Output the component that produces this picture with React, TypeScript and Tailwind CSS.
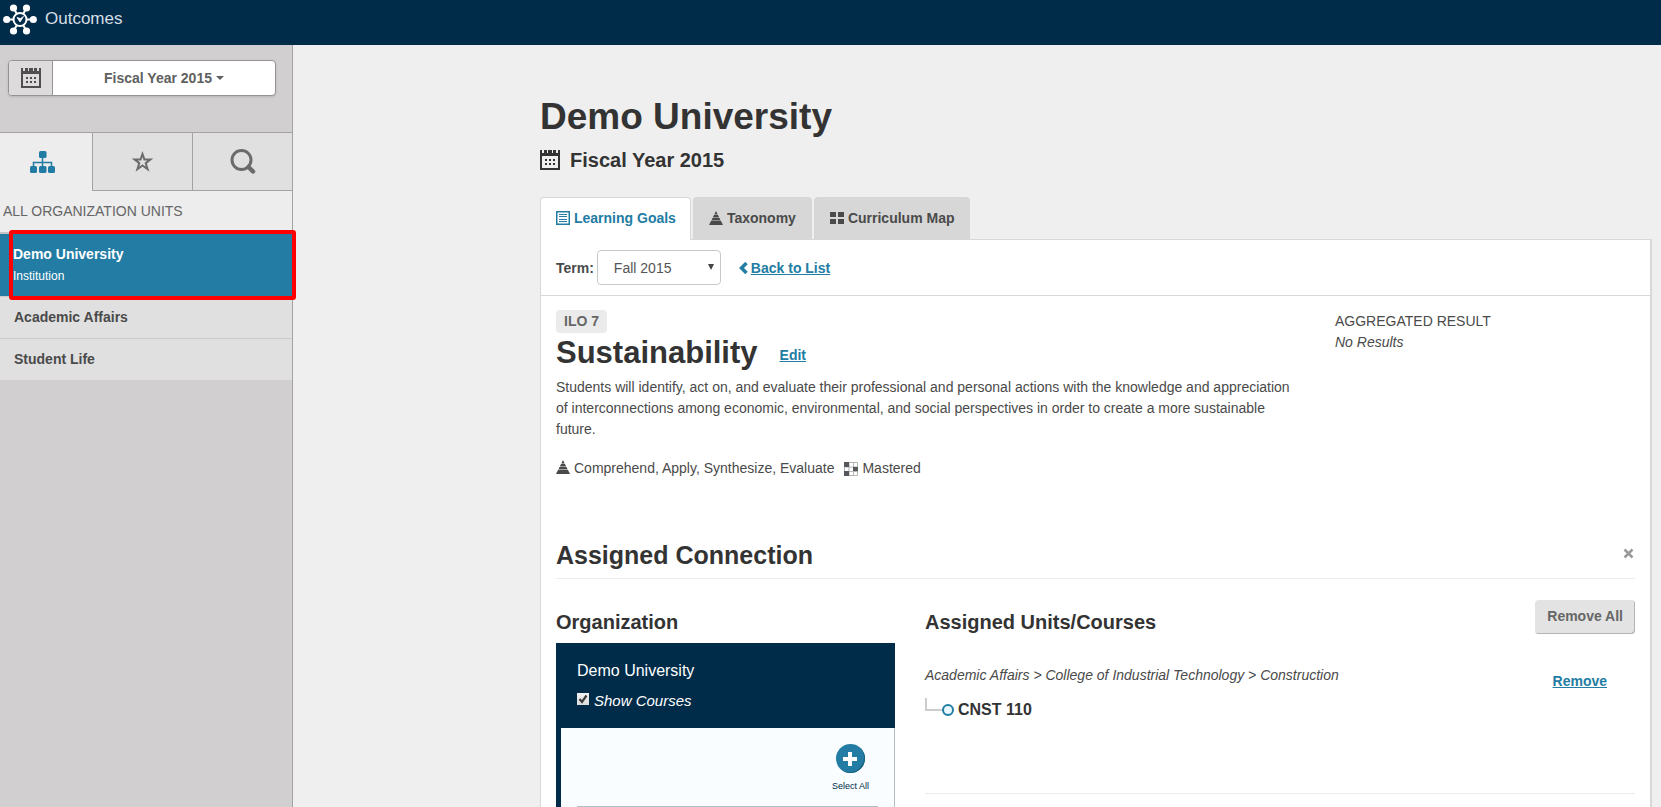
import type { ReactNode } from "react";

function LogoIcon() {
  const nodes = [
    [10.500, 5],
    [23.500, 5],
    [30.300, 16.500],
    [23.500, 28],
    [10.500, 28],
    [3.700, 16.500],
  ];
  return (
    <svg viewBox="0 0 34 33" className="h-[33px] w-[34px]" aria-hidden="true">
      {nodes.map(([x, y]) => (
        <g key={`${x}-${y}`}>
          <path d={`M17 16.5L${x} ${y}`} stroke="#fff" strokeWidth="2" />
          <circle cx={x} cy={y} r="3.6" fill="#fff" />
        </g>
      ))}
      <circle cx="17" cy="16.500" r="6.500" fill="#002b49" stroke="#fff" strokeWidth="2" />
      <path d="M14 14.500l3 4.500 3.500-5.500-3 2z" fill="#fff" stroke="#fff" strokeWidth="0.800" />
    </svg>
  );
}

function CalendarIcon() {
  return (
    <svg viewBox="0 0 20 20" className="h-5 w-5 shrink-0" fill="currentColor" aria-hidden="true">
      <path fillRule="evenodd" d="M0 0h2v3h2V0h3v3h1V0h4v3h1V0h3v3h2V0h2v20H0zM2 6v12h16V6z" />
      <path d="M5 9h2v2H5zM9 9h2v2H9zM13 9h2v2h-2zM5 13h2v2H5zM9 13h2v2H9zM13 13h2v2h-2z" />
    </svg>
  );
}

function SitemapIcon() {
  return (
    <svg viewBox="0 0 25 22" className="h-[22px] w-[25px]" fill="currentColor" aria-hidden="true">
      <rect x="9" y="0" width="7.500" height="7" rx="1.500" />
      <rect x="0" y="15" width="7" height="7" rx="1.500" />
      <rect x="9" y="15" width="7.500" height="7" rx="1.500" />
      <rect x="18" y="15" width="7" height="7" rx="1.500" />
      <path d="M12.500 6v10M3.500 16v-4.500h18V16" fill="none" stroke="currentColor" strokeWidth="1.500" />
    </svg>
  );
}

function StarIcon() {
  return (
    <svg viewBox="0 0 21 21" className="h-[21px] w-[21px]" aria-hidden="true">
      <path
        d="M10.500 3l1.900 5.400h6l-4.700 3.700 1.900 6.100-5.100-3.700-5.100 3.700 1.900-6.100-4.700-3.700h6z"
        fill="none"
        stroke="currentColor"
        strokeWidth="2"
      />
    </svg>
  );
}

function SearchIcon() {
  return (
    <svg viewBox="0 0 26 26" className="h-[26px] w-[26px]" aria-hidden="true">
      <circle cx="11.500" cy="11" r="9.500" fill="none" stroke="currentColor" strokeWidth="3" />
      <path d="M18.500 18l4.500 4.500" stroke="currentColor" strokeWidth="4.500" strokeLinecap="round" />
    </svg>
  );
}

function ListIcon() {
  return (
    <svg viewBox="0 0 14 14" className="h-3.5 w-3.5 shrink-0" aria-hidden="true">
      <rect x="0.750" y="0.750" width="12.500" height="12.500" fill="none" stroke="currentColor" strokeWidth="1.500" />
      <path d="M3 3.500h8M3 5.500h8M3 8.500h8M3 10.500h8" stroke="currentColor" strokeWidth="1" />
    </svg>
  );
}

function PyramidIcon() {
  return (
    <svg viewBox="0 0 14 14" className="h-3.5 w-3.5 shrink-0" fill="currentColor" aria-hidden="true">
      <path d="M7 0l1.700 3.400H5.300zM5 4h4l1.200 2.400H3.800zM3.500 7h7l1.200 2.400H2.300zM2 10h10l2 4H0z" />
    </svg>
  );
}

function GridIcon() {
  return (
    <svg viewBox="0 0 14 12" className="h-3 w-3.5 shrink-0" fill="currentColor" aria-hidden="true">
      <path d="M0 0h6v5H0zM8 0h6v5H8zM0 7h6v5H0zM8 7h6v5H8z" />
    </svg>
  );
}

function MatrixIcon() {
  return (
    <svg viewBox="0 0 14 14" className="h-3.5 w-3.5 shrink-0" aria-hidden="true">
      <path d="M.5.5h13v13H.5zM5 .5v13M9.500.5v13M.5 5h13M.5 9.500h13" fill="#fff" stroke="#b5b5b5" />
      <path d="M0 0h5v5H0zM9 5h5v4H9zM0 9h5v5H0z" fill="#54585c" />
    </svg>
  );
}

const units = ["Academic Affairs", "Student Life"];

function SidebarTab({ label, children }: { label: string; children: ReactNode }) {
  return (
    <button
      type="button"
      aria-label={label}
      className="flex flex-1 items-center justify-center border-b border-l border-[#a3a3a3] bg-[#e0e0e0] text-[#6b6b6b]"
    >
      {children}
    </button>
  );
}

function Sidebar() {
  return (
    <aside className="relative w-[293px] shrink-0 border-r border-[#a3a3a3] bg-[#d1cfcf]">
      <div className="px-2 pt-[15px] pb-9">
        <button
          type="button"
          className="flex h-9 w-[268px] overflow-hidden rounded border border-[#949494] bg-white text-sm font-bold text-[#606060] shadow-sm"
        >
          <span className="flex h-full w-11 items-center justify-center border-r border-[#949494] bg-[#dddbdb] text-[#4f4f4f]">
            <CalendarIcon />
          </span>
          <span className="flex h-full flex-1 items-center justify-center gap-1">
            Fiscal Year 2015
            <svg viewBox="0 0 8 4" className="h-1 w-2" fill="currentColor" aria-hidden="true">
              <path d="M0 0h8L4 4z" />
            </svg>
          </span>
        </button>
      </div>

      <div className="flex h-[59px] border-t border-[#a3a3a3]">
        <button
          type="button"
          aria-label="Organization units"
          className="flex w-[92px] items-center justify-center bg-[#ededed] pr-2 text-[#227ca3]"
        >
          <SitemapIcon />
        </button>
        <SidebarTab label="Favorites">
          <StarIcon />
        </SidebarTab>
        <SidebarTab label="Search">
          <SearchIcon />
        </SidebarTab>
      </div>

      <h2 className="h-[43px] border-b-2 border-[#c4c4c4] bg-[#ededed] px-[3px] pt-2.5 text-sm leading-5 text-[#666]">
        ALL ORGANIZATION UNITS
      </h2>
      <nav>
        <a href="#demo" className="block h-[62px] bg-[#227ca3] px-[13px] pt-[9px] text-white">
          <span className="block text-sm leading-[22px] font-bold">Demo University</span>
          <span className="block text-xs leading-[22px]">Institution</span>
        </a>
        {units.map((unit) => (
          <a
            key={unit}
            href="#unit"
            className="block h-[42px] border-t border-[#cbcbcb] bg-[#e0e0e0] px-3.5 text-sm leading-10 font-bold text-[#4a4a4a]"
          >
            {unit}
          </a>
        ))}
      </nav>

      {/* highlight frame around the selected unit */}
      <div className="pointer-events-none absolute top-[185px] left-[9px] h-[70px] w-[287px] rounded-[3px] border-4 border-[#fe0000]" />
    </aside>
  );
}

function Tabs() {
  return (
    <div className="flex gap-0.5 text-sm font-bold text-[#4a4a4a]" role="tablist">
      <button
        type="button"
        role="tab"
        aria-selected="true"
        className="-mb-px flex h-[43px] items-center gap-1 rounded-t border border-b-0 border-[#d8d8d8] bg-white pr-3.5 pb-0.5 pl-[15px] text-[#227ca3]"
      >
        <ListIcon />
        Learning Goals
      </button>
      <button type="button" role="tab" aria-selected="false" className="flex h-[42px] items-center gap-1 rounded-t bg-[#d7d7d7] px-4">
        <PyramidIcon />
        Taxonomy
      </button>
      <button type="button" role="tab" aria-selected="false" className="flex h-[42px] items-center gap-1 rounded-t bg-[#d7d7d7] px-4">
        <GridIcon />
        Curriculum Map
      </button>
    </div>
  );
}

function GoalSummary() {
  return (
    <section className="flex px-[15px] pt-3.5">
      <div className="w-[748px] shrink-0">
        <span className="block h-[23px] w-fit rounded bg-[#ebebeb] px-2 text-sm leading-[23px] font-bold text-[#666]">
          ILO 7
        </span>
        <div className="flex items-center gap-[22px]">
          <h2 className="text-[31px] leading-10 font-bold text-[#333]">Sustainability</h2>
          <a href="#edit" className="pt-1 text-sm leading-5 font-bold text-[#227ca3] underline">
            Edit
          </a>
        </div>
        <p className="mt-1 text-sm leading-[21px]">
          Students will identify, act on, and evaluate their professional and personal actions with the knowledge and
          appreciation of interconnections among economic, environmental, and social perspectives in order to create a
          more sustainable future.
        </p>
        <div className="mt-[18px] flex items-center gap-1 text-sm leading-[21px]">
          <span className="pb-1">
            <PyramidIcon />
          </span>
          <span className="mr-1.5">Comprehend, Apply, Synthesize, Evaluate</span>
          <MatrixIcon />
          <span>Mastered</span>
        </div>
      </div>
      <div className="ml-[31px] pt-px text-sm leading-[21px]">
        <h3>AGGREGATED RESULT</h3>
        <p className="italic">No Results</p>
      </div>
    </section>
  );
}

function OrganizationPicker() {
  return (
    <div className="w-[339px] shrink-0">
      <h3 className="pt-2 text-xl leading-7 font-bold text-[#333]">Organization</h3>
      <div className="mt-[7px] bg-[#002b49] text-white">
        <div className="h-[85px] px-[21px] pt-4">
          <p className="text-base leading-6">Demo University</p>
          <label className="mt-1.5 flex items-center gap-[5px] text-[15px] leading-6 italic">
            <span className="relative -mt-1 flex">
              <input
                type="checkbox"
                defaultChecked
                className="peer h-3 w-3 appearance-none bg-linear-to-b from-[#f2f2f2] to-[#dcdcdc]"
              />
              <svg viewBox="0 0 12 12" className="pointer-events-none absolute inset-0 hidden h-3 w-3 peer-checked:block" aria-hidden="true">
                <path d="M2.500 6l2.500 3 4.500-6.500" fill="none" stroke="#3c3c3c" strokeWidth="2.200" />
              </svg>
            </span>
            Show Courses
          </label>
        </div>
        <div className="ml-[5px] border-r border-[#b4c0c9] bg-[#fafdff] px-4 pt-4 text-[#002b49]">
          <div className="flex justify-end pr-[9px]">
            <button type="button" className="flex flex-col items-center gap-[7px] text-[9px] leading-3">
              <span className="flex h-[29px] w-[29px] items-center justify-center rounded-full bg-[#227ca3] shadow-[inset_-1px_-1px_0_#1b6382]">
                <svg viewBox="0 0 14 14" className="h-3.5 w-3.5" aria-hidden="true">
                  <path d="M7 0v14M0 7h14" stroke="#fff" strokeWidth="4" />
                </svg>
              </span>
              Select All
            </button>
          </div>
          <div className="mt-3.5 h-24 border-t border-[#b4c0c9]" />
        </div>
      </div>
    </div>
  );
}

function AssignedUnits() {
  return (
    <div className="ml-[30px] flex-1">
      <div className="flex items-start justify-between">
        <h3 className="pt-2 text-xl leading-7 font-bold text-[#333]">Assigned Units/Courses</h3>
        <button
          type="button"
          className="h-[34px] rounded bg-[#e3e3e3] px-3 pb-0.5 text-sm font-bold text-[#666] shadow-[inset_-1px_-1px_0_#b5b5b5]"
        >
          Remove All
        </button>
      </div>
      <div className="flex h-[158px] items-start justify-between border-b border-[#ececec] pt-[29px]">
        <div>
          <p className="text-sm leading-[21px] italic">
            Academic Affairs &gt; College of Industrial Technology &gt; Construction
          </p>
          <div className="mt-3 flex items-start">
            <svg viewBox="0 0 30 20" className="h-5 w-[30px]" fill="none" aria-hidden="true">
              <path d="M1 0v12h17" stroke="#ccc" strokeWidth="2" />
              <circle cx="23" cy="12" r="5" fill="#e9f8fd" stroke="#227ca3" strokeWidth="2" />
            </svg>
            <h4 className="ml-[3px] text-base leading-6 font-bold text-[#333]">CNST 110</h4>
          </div>
        </div>
        <a href="#remove" className="mt-1.5 mr-7 text-sm leading-[21px] font-bold text-[#227ca3] underline">
          Remove
        </a>
      </div>
    </div>
  );
}

export default function App() {
  return (
    <div className="flex h-screen flex-col overflow-hidden bg-[#efefef] font-['Liberation_Sans',Arial,sans-serif] text-[#4a4a4a]">
      <header className="flex h-[45px] shrink-0 items-start bg-[#002b49]">
        <div className="flex items-start gap-2 pt-[3px] pl-[3px]">
          <LogoIcon />
          <span className="text-[17px] leading-8 text-[#d6dee4]">Outcomes</span>
        </div>
      </header>

      <div className="flex min-h-0 flex-1">
        <Sidebar />
        <main className="min-w-0 flex-1 overflow-hidden pt-[49px] pr-[9px] pl-[247px]">
          <h1 className="text-[37px] leading-[46px] font-bold text-[#333]">Demo University</h1>
          <div className="mt-[5px] flex items-center gap-2.5 text-xl leading-[30px] font-bold text-[#333]">
            <CalendarIcon />
            Fiscal Year 2015
          </div>

          <div className="mt-[22px]">
            <Tabs />
            <div className="border-t border-r-2 border-l border-[#d8d8d8] bg-white">
              <div className="flex h-14 items-center border-b border-[#d8d8d8] px-[15px] text-sm font-bold">
                <label htmlFor="term">Term:</label>
                <span className="relative ml-[3px] flex">
                  <select
                    id="term"
                    defaultValue="Fall 2015"
                    className="h-[35px] w-[124px] appearance-none rounded border border-[#c8c8c8] bg-white pl-4 text-sm font-normal text-[#555]"
                  >
                    <option>Fall 2015</option>
                  </select>
                  <svg viewBox="0 0 6 6" className="pointer-events-none absolute top-3.5 right-[7px] h-1.5 w-1.5" fill="#444" aria-hidden="true">
                    <path d="M0 0h6L3 6z" />
                  </svg>
                </span>
                <a href="#list" className="ml-[18px] flex items-center gap-[3px] text-[#227ca3]">
                  <svg viewBox="0 0 9 12" className="h-3 w-[9px]" fill="none" aria-hidden="true">
                    <path d="M7.500 1L2.500 6l5 5" stroke="currentColor" strokeWidth="3.500" />
                  </svg>
                  <span className="underline">Back to List</span>
                </a>
              </div>

              <GoalSummary />

              <section className="px-[15px] pt-[57px]">
                <div className="flex h-[43px] items-start justify-between border-b border-[#ececec]">
                  <h2 className="text-[25px] leading-[38px] font-bold text-[#333]">Assigned Connection</h2>
                  <button type="button" aria-label="Close" className="mt-3 mr-px text-[#999]">
                    <svg viewBox="0 0 11 11" className="h-[11px] w-[11px]" aria-hidden="true">
                      <path d="M1.500 1.500l8 8M9.500 1.500l-8 8" stroke="currentColor" strokeWidth="2.500" />
                    </svg>
                  </button>
                </div>
                <div className="mt-[21px] flex">
                  <OrganizationPicker />
                  <AssignedUnits />
                </div>
              </section>
            </div>
          </div>
        </main>
      </div>
    </div>
  );
}
